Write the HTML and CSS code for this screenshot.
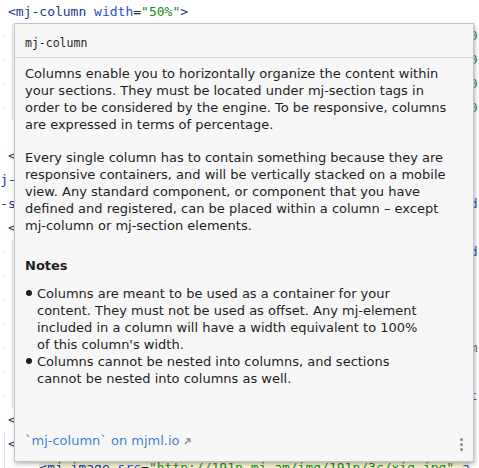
FILE: index.html
```html
<!DOCTYPE html>
<html>
<head>
<meta charset="utf-8">
<link rel="stylesheet" href="styles.css">
</head>
<body>
<div class="editor">
  <div class="line"><span class="br">&lt;</span><span class="tag">mj-column</span> <span class="attr">width</span><span class="eq">=</span><span class="str">"50%"</span><span class="br">&gt;</span></div>
  <div class="line guide dot">                                                           <span class="str">0</span></div>
  <div class="line guide dot">                                                           <span class="str">0</span></div>
  <div class="line guide dot">                                                           <span class="str">0</span></div>
  <div class="line guide dot">                                                           <span class="str">0</span></div>
  <div class="line"> </div>
  <div class="line"><span class="br">&lt;</span></div>
  <div class="line shift1"><span class="tag">j-</span></div>
  <div class="line shift1"><span class="tag">-s</span>                                                          <span class="attr">d</span></div>
  <div class="line"><span class="br">&lt;</span></div>
  <div class="line guide dot">                                                           <span class="attr">d</span></div>
  <div class="line guide dot"> </div>
  <div class="line guide dot"> </div>
  <div class="line guide dot"> </div>
  <div class="line guide dot">                                                           <span class="txt">m</span></div>
  <div class="line guide dot"> </div>
  <div class="line guide dot">                                                           <span class="attr">t</span></div>
  <div class="line"><span class="br">&lt;</span></div>
  <div class="line guide2"><span class="br">&lt;</span></div>
  <div class="line guide2">    <span class="hl"><span class="br">&lt;</span><span class="tag">mj-image</span> <span class="attr">src</span><span class="eq">=</span><span class="str">"http://191n.mj.am/img/191n/3c/xig.jpg"</span> <span class="attr">a</span></span></div>
</div>

<div class="popup">
  <div class="doc-header">mj-column</div>
  <div class="doc-body">
    <p>Columns enable you to horizontally organize the content within<br>your sections. They must be located under mj-section tags in<br>order to be considered by the engine. To be responsive, columns<br>are expressed in terms of percentage.</p>
    <p>Every single column has to contain something because they are<br>responsive containers, and will be vertically stacked on a mobile<br>view. Any standard component, or component that you have<br>defined and registered, can be placed within a column – except<br>mj-column or mj-section elements.</p>
    <h3>Notes</h3>
    <ul>
      <li><span class="bullet"></span><span>Columns are meant to be used as a container for your<br>content. They must not be used as offset. Any mj-element<br>included in a column will have a width equivalent to 100%<br>of this column's width.</span></li>
      <li><span class="bullet"></span><span>Columns cannot be nested into columns, and sections<br>cannot be nested into columns as well.</span></li>
    </ul>
  </div>
  <div class="doc-footer">
    <span class="link">`mj-column` on mjml.io<svg class="ext" width="7" height="7" viewBox="0 0 7 7"><path d="M1 6 L6 1 M2.5 1 H6 V4.5" fill="none" stroke="#8a8a8a" stroke-width="1.3"/></svg></span>
    <span class="kebab"><i></i><i></i><i></i></span>
  </div>
</div>
</body>
</html>
```
FILE: styles.css
```css
html, body {
  margin: 0;
  padding: 0;
  background: #ffffff;
  overflow: hidden;
}
body {
  width: 479px;
  height: 468px;
  position: relative;
}
.editor {
  font-family: "DejaVu Sans Mono", monospace;
  font-size: 13px;
  color: #1f1f1f;
}
.line {
  height: 24px;
  line-height: 24px;
  white-space: pre;
  padding-left: 8px;
  overflow: hidden;
}
.guide {
  background:
    linear-gradient(#e3e3e3, #e3e3e3) 12px 0 / 1px 100% no-repeat;
}
.guide.dot {
  background:
    linear-gradient(#c8c8c8, #c8c8c8) 3px 12px / 1px 1px no-repeat,
    linear-gradient(#e3e3e3, #e3e3e3) 12px 0 / 1px 100% no-repeat;
}
.guide2 {
  background:
    linear-gradient(#e3e3e3, #e3e3e3) 4px 0 / 1px 100% no-repeat;
}
.shift1 { text-indent: -7.83px; }
.br { color: #1b3a78; }
.tag { color: #1b3a8c; }
.attr { color: #2a4fd3; }
.eq { color: #222222; }
.str { color: #1f8a22; }
.txt { color: #8a5a00; }
.hl { background: #f4f1d2; }

.popup {
  position: absolute;
  left: 14px;
  top: 23px;
  width: 460px;
  height: 439px;
  box-sizing: border-box;
  border: 1px solid #c3c3c3;
  background: #f7f7f7;
  box-shadow: 1px 2px 4px rgba(0, 0, 0, 0.28);
  display: flex;
  flex-direction: column;
  font-family: "DejaVu Sans", sans-serif;
  font-size: 13px;
  color: #1e1e1e;
}
.doc-header {
  font-family: "DejaVu Sans Mono", monospace;
  font-size: 11.5px;
  line-height: 17px;
  padding: 11px 10px 5px;
  border-bottom: 1px solid #d4d4d4;
  color: #1f1f1f;
}
.doc-body {
  flex: 1;
  padding: 7px 10px 0;
  line-height: 17px;
}
.doc-body p {
  margin: 0 0 16px;
  white-space: nowrap;
}
.doc-body h3 {
  margin: 23px 0 0;
  font-size: 13px;
  line-height: 17px;
  font-weight: bold;
}
.doc-body ul {
  list-style: none;
  margin: 11px 0 0;
  padding: 0;
}
.doc-body li {
  display: flex;
  white-space: nowrap;
}
.bullet {
  flex: none;
  width: 6px;
  height: 6px;
  border-radius: 50%;
  background: #1e1e1e;
  margin: 5px 5px 0 1px;
}
.doc-footer {
  display: flex;
  justify-content: space-between;
  align-items: flex-end;
  padding: 0 10px 10px;
}
.link {
  color: #3f84d1;
  line-height: 17px;
  margin-bottom: 2px;
  display: flex;
  align-items: center;
}
.ext {
  margin-left: 4px;
  margin-top: 1px;
}
.kebab {
  display: flex;
  flex-direction: column;
  gap: 2px;
  width: 3px;
}
.kebab i {
  display: block;
  width: 3px;
  height: 3px;
  border-radius: 50%;
  background: #8a8a8a;
}
```
